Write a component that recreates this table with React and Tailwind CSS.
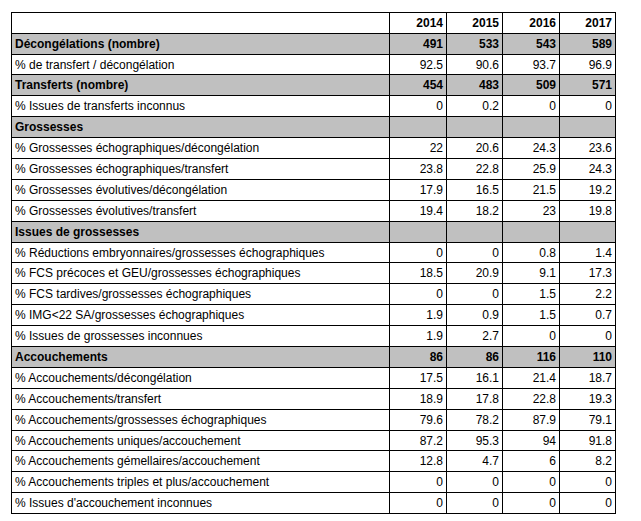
import React from 'react';

const rows = [
  { label: '', values: ['2014', '2015', '2016', '2017'], bold: true },
  { label: 'Décongélations (nombre)', values: ['491', '533', '543', '589'], section: true },
  { label: '% de transfert / décongélation', values: ['92.5', '90.6', '93.7', '96.9'], short: true },
  { label: 'Transferts (nombre)', values: ['454', '483', '509', '571'], section: true },
  { label: '% Issues de transferts inconnus', values: ['0', '0.2', '0', '0'] },
  { label: 'Grossesses', values: ['', '', '', ''], section: true },
  { label: '% Grossesses échographiques/décongélation', values: ['22', '20.6', '24.3', '23.6'] },
  { label: '% Grossesses échographiques/transfert', values: ['23.8', '22.8', '25.9', '24.3'] },
  { label: '% Grossesses évolutives/décongélation', values: ['17.9', '16.5', '21.5', '19.2'] },
  { label: '% Grossesses évolutives/transfert', values: ['19.4', '18.2', '23', '19.8'] },
  { label: 'Issues de grossesses', values: ['', '', '', ''], section: true },
  { label: '% Réductions embryonnaires/grossesses échographiques', values: ['0', '0', '0.8', '1.4'], short: true },
  { label: '% FCS précoces et GEU/grossesses échographiques', values: ['18.5', '20.9', '9.1', '17.3'] },
  { label: '% FCS tardives/grossesses échographiques', values: ['0', '0', '1.5', '2.2'] },
  { label: '% IMG<22 SA/grossesses échographiques', values: ['1.9', '0.9', '1.5', '0.7'] },
  { label: '% Issues de grossesses inconnues', values: ['1.9', '2.7', '0', '0'] },
  { label: 'Accouchements', values: ['86', '86', '116', '110'], section: true },
  { label: '% Accouchements/décongélation', values: ['17.5', '16.1', '21.4', '18.7'] },
  { label: '% Accouchements/transfert', values: ['18.9', '17.8', '22.8', '19.3'] },
  { label: '% Accouchements/grossesses échographiques', values: ['79.6', '78.2', '87.9', '79.1'] },
  { label: '% Accouchements uniques/accouchement', values: ['87.2', '95.3', '94', '91.8'], short: true },
  { label: '% Accouchements gémellaires/accouchement', values: ['12.8', '4.7', '6', '8.2'] },
  { label: '% Accouchements triples et plus/accouchement', values: ['0', '0', '0', '0'] },
  { label: "% Issues d'accouchement inconnues", values: ['0', '0', '0', '0'] },
];

const App = () => {
  return (
    <div
      className="w-[641px] h-[521px] bg-white pl-[11px] pt-[12px] text-[12px] text-black"
      style={{ fontFamily: '"Liberation Sans", Arial, sans-serif' }}
    >
      <div className="w-[605px] flex flex-col gap-px p-px bg-black">
        {rows.map((row, i) => {
          const cellBg = row.section ? 'bg-[#c0c0c0]' : 'bg-white';
          const weight = row.section || row.bold ? 'font-bold' : 'font-normal';
          return (
            <div
              key={i}
              className={`grid grid-cols-[377px_56px_55px_56px_55px] gap-px ${row.short ? 'h-[19px]' : 'h-[20px]'}`}
            >
              <div className={`${cellBg} ${weight} flex items-center pl-[3px] whitespace-nowrap overflow-hidden leading-none`}>
                {row.label}
              </div>
              {row.values.map((v, j) => (
                <div key={j} className={`${cellBg} ${weight} flex items-center justify-end pr-[3px] leading-none`}>
                  {v}
                </div>
              ))}
            </div>
          );
        })}
      </div>
    </div>
  );
};

export default App;
